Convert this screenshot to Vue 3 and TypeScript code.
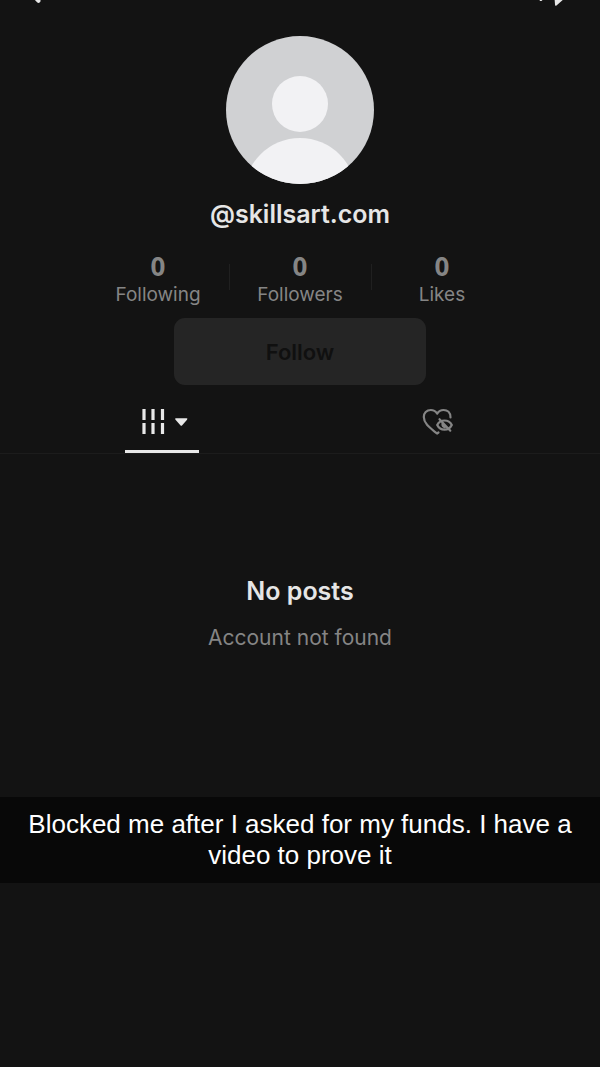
<script setup lang="ts">
interface Stat {
  value: number
  label: string
}

const handle = '@skillsart.com'
const stats: Stat[] = [
  { value: 0, label: 'Following' },
  { value: 0, label: 'Followers' },
  { value: 0, label: 'Likes' },
]
</script>

<template>
  <main class="page">
    <header class="topbar">
      <button class="icon-button" type="button" aria-label="Back">
        <svg width="16" height="8" viewBox="0 0 16 8">
          <path d="M0-10 10.500 .8" fill="none" stroke="#e6e6e6" stroke-width="4" stroke-linecap="round" />
        </svg>
      </button>
      <button class="icon-button" type="button" aria-label="Share">
        <svg width="32" height="8" viewBox="0 0 32 8">
          <path d="M7-1h4.500L9.500 1H8zM22.500-2H33L24.500 5.500q-1.500 1-1.500-1z" fill="#e6e6e6" />
        </svg>
      </button>
    </header>

    <section class="profile">
      <svg class="avatar" viewBox="0 0 148 148" role="img" aria-label="Profile picture">
        <defs>
          <clipPath id="avatar-clip"><circle cx="74" cy="74" r="74" /></clipPath>
        </defs>
        <g clip-path="url(#avatar-clip)">
          <rect width="148" height="148" fill="#d0d1d3" />
          <circle cx="74" cy="68" r="28" fill="#f2f2f4" />
          <circle cx="74" cy="158" r="56" fill="#f2f2f4" />
        </g>
      </svg>
      <h1 class="handle">{{ handle }}</h1>
      <ul class="stats">
        <li v-for="stat in stats" :key="stat.label" class="stat">
          <strong class="stat-value">{{ stat.value }}</strong>
          <span class="stat-label">{{ stat.label }}</span>
        </li>
      </ul>
      <button class="follow" type="button">Follow</button>
    </section>

    <nav class="tabs" aria-label="Profile content">
      <button class="tab tab-active" type="button" aria-label="Posts">
        <svg width="46" height="26" viewBox="0 0 46 26">
          <path d="M2 0v11M11 0v11M20.500 0v11M2 14v11M11 14v11M20.500 14v11" stroke="#e8e8e8" stroke-width="3.200" />
          <path d="M34 9.300h10.500q1.500 0 .5 1.400l-4.800 5.600q-.9 1-1.800 0L33.500 10.700q-1-1.400.5-1.400z" fill="#e8e8e8" />
        </svg>
      </button>
      <button class="tab" type="button" aria-label="Liked posts">
        <svg width="32" height="28" viewBox="0 0 32 28" fill="none" stroke="#858585" stroke-width="2.200" stroke-linecap="round" stroke-linejoin="round">
          <path d="M28.500 9.500C28.500 4.500 25.500 2 21.500 2 18.500 2 16.500 3.500 15.200 5.600 13.800 3.500 11.700 2 8.800 2 4.500 2 1.800 5 1.800 9c0 7 7.200 11.500 13.200 16.500l1.500-1" />
          <path d="M15.200 17c1.500-3 4.200-4.500 7.300-4.500s5.800 1.500 7.300 4.500c-1.500 3-4.200 4.700-7.300 4.700s-5.800-1.700-7.300-4.700z" />
          <path d="M17.500 11.200l10.800 11.500M20.500 14.500v2.500q.4 2 2.200 2.300" />
        </svg>
      </button>
    </nav>

    <section class="empty">
      <h2 class="empty-title">No posts</h2>
      <p class="empty-text">Account not found</p>
    </section>

    <p class="caption">Blocked me after I asked for my funds. I have a video to prove it</p>
  </main>
</template>

<style>
body {
  margin: 0;
  background: #131313;
}
</style>

<style scoped>
.page {
  min-height: 100vh;
  background: #131313;
  color: #e6e6e6;
  font-family: Inter, "Noto Sans", sans-serif;
}

button {
  padding: 0;
  border: 0;
  background: none;
  font: inherit;
  cursor: pointer;
}

svg {
  display: block;
}

.topbar {
  display: flex;
  justify-content: space-between;
  height: 36px;
  padding: 0 36px 0 28px;
}

.icon-button {
  align-self: flex-start;
}

.profile {
  display: flex;
  flex-direction: column;
  align-items: center;
}

.avatar {
  width: 148px;
  height: 148px;
}

.handle {
  margin: 12px 0 0;
  font-size: 25px;
  line-height: 36px;
  font-weight: 600;
}

.stats {
  display: flex;
  margin: 20px 0 0;
  padding: 0;
  list-style: none;
}

.stat {
  position: relative;
  display: flex;
  flex-direction: column;
  align-items: center;
  width: 142px;
  color: #858585;
}

.stat + .stat::before {
  content: "";
  position: absolute;
  left: 0;
  top: 12px;
  width: 1px;
  height: 26px;
  background: #202020;
}

.stat-value {
  font-family: "Noto Sans", sans-serif;
  font-size: 26px;
  line-height: 28px;
  font-weight: 700;
}

.stat-label {
  font-size: 19px;
  line-height: 30px;
}

.follow {
  width: 42%;
  height: 67px;
  margin-top: 8px;
  border-radius: 11px;
  background: #252525;
  color: #101010;
  font-size: 22px;
  font-weight: 600;
}

.tabs {
  display: flex;
  justify-content: space-around;
  height: 68px;
  padding: 0 24px;
  border-bottom: 1px solid #1c1c1c;
}

.tab {
  display: flex;
  justify-content: center;
  align-items: center;
  width: 74px;
  padding-top: 9px;
  border-bottom: 3px solid transparent;
}

.tab-active {
  padding-left: 5px;
  border-bottom-color: #e8e8e8;
}

.empty {
  padding: 119px 24px 144px;
  text-align: center;
}

.empty-title {
  margin: 0;
  font-size: 25px;
  line-height: 36px;
  font-weight: 600;
}

.empty-text {
  margin: 14px 0 0;
  color: #858585;
  font-size: 21px;
  line-height: 30px;
}

.caption {
  margin: 0;
  padding: 12px 24px;
  background: #080808;
  color: #ffffff;
  font-family: "Liberation Sans", Arial, sans-serif;
  font-size: 26px;
  line-height: 31px;
  text-align: center;
}
</style>
